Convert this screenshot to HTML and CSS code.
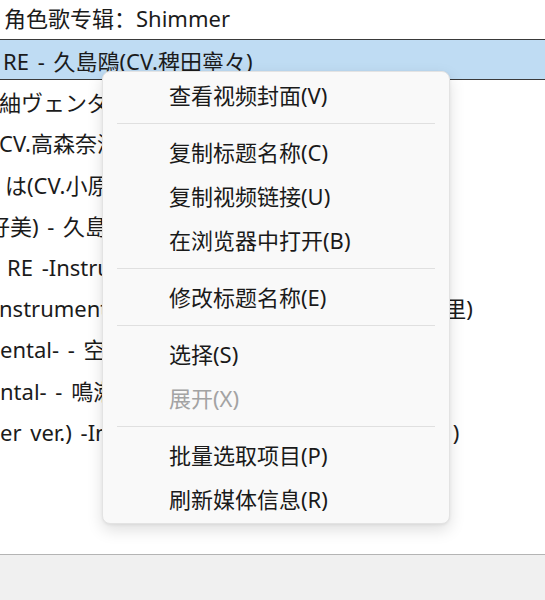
FILE: index.html
```html
<!DOCTYPE html>
<html lang="zh-CN">
<head>
<meta charset="utf-8">
<title>角色歌专辑</title>
<link rel="stylesheet" href="styles.css">
</head>
<body>
<div class="window">
  <div class="album-title">角色歌专辑：Shimmer</div>
  <div class="list">
    <div class="row selected"><span class="txt in-3">RE - 久島鴎(CV.稗田寧々)</span></div>
    <div class="row"><span class="txt in-n1">紬ヴェンダース(CV.高森奈津美)</span></div>
    <div class="row"><span class="txt in-n1">CV.高森奈津美) - 鳴瀬しろは</span></div>
    <div class="row"><span class="txt in-5">は(CV.小原好美)</span></div>
    <div class="row"><span class="txt in-n12">好美) - 久島鴎(CV.稗田寧々)</span></div>
    <div class="row"><span class="txt in-7">RE -Instrumental- - 久島鴎</span></div>
    <div class="row"><span class="txt in-n1">nstrumental- - 鳴瀬白羽·空門蒼(CV.岩井映美里)</span></div>
    <div class="row"><span class="txt in-0">ental- - 空門蒼(CV.岩井映美里)</span></div>
    <div class="row"><span class="txt in-0">ntal- - 鳴瀬しろは(CV.小原好美)</span></div>
    <div class="row"><span class="txt in-0">er ver.) -Instrumental-鳴瀬白羽(CV.小原好美 )</span></div>
  </div>
  <div class="status"></div>

  <div class="menu">
    <div class="item">查看视频封面(V)</div>
    <div class="sep"></div>
    <div class="item">复制标题名称(C)</div>
    <div class="item">复制视频链接(U)</div>
    <div class="item">在浏览器中打开(B)</div>
    <div class="sep"></div>
    <div class="item">修改标题名称(E)</div>
    <div class="sep"></div>
    <div class="item">选择(S)</div>
    <div class="item disabled">展开(X)</div>
    <div class="sep"></div>
    <div class="item">批量选取项目(P)</div>
    <div class="item">刷新媒体信息(R)</div>
  </div>
</div>
</body>
</html>
```
FILE: styles.css
```css
html, body {
  margin: 0;
  padding: 0;
  background: #ffffff;
}

body {
  font-family: "Noto Sans", "Noto Sans CJK SC", sans-serif;
  font-size: 22px;
  color: #1b1b1b;
}

.window {
  position: relative;
  width: 545px;
  height: 600px;
  overflow: hidden;
  display: flex;
  flex-direction: column;
}

.album-title {
  height: 39px;
  line-height: 37px;
  padding-left: 4px;
  white-space: nowrap;
}

.list {
  height: 515px;
  border-bottom: 1px solid #b4b4b4;
  overflow: hidden;
  word-spacing: 3px;
}

.row {
  height: 41.2px;
  box-sizing: border-box;
  padding-top: 3px;
  display: flex;
  align-items: center;
  white-space: nowrap;
}

.row.selected {
  background: #bfdcf3;
  border-top: 1px solid #3a3a3a;
  border-bottom: 1px solid #3a3a3a;
}

.txt {
  display: block;
  line-height: 30px;
}
.in-0 { margin-left: 0; }
.in-3 { margin-left: 3px; }
.in-5 { margin-left: 5px; }
.in-7 { margin-left: 7px; }
.in-n1 { margin-left: -1px; }
.in-n12 { margin-left: -12px; }

.status {
  flex: 1;
  background: #f0f0f0;
}

.menu {
  position: absolute;
  left: 102px;
  top: 71px;
  width: 346px;
  padding: 1px 0 2px;
  background: #f9f9f9;
  border: 1px solid #e3e3e3;
  border-radius: 8px;
  box-shadow: 0 6px 16px rgba(0, 0, 0, 0.13), 0 1px 3px rgba(0, 0, 0, 0.06);
}

.item {
  height: 44px;
  line-height: 44px;
  padding-left: 66px;
  white-space: nowrap;
  color: #1a1a1a;
}

.item.disabled {
  color: #a3a3a3;
}

.sep {
  height: 13px;
  display: flex;
  align-items: center;
  padding: 0 14px;
}

.sep::before {
  content: "";
  flex: 1;
  height: 1px;
  background: #e0e0e0;
}
```
